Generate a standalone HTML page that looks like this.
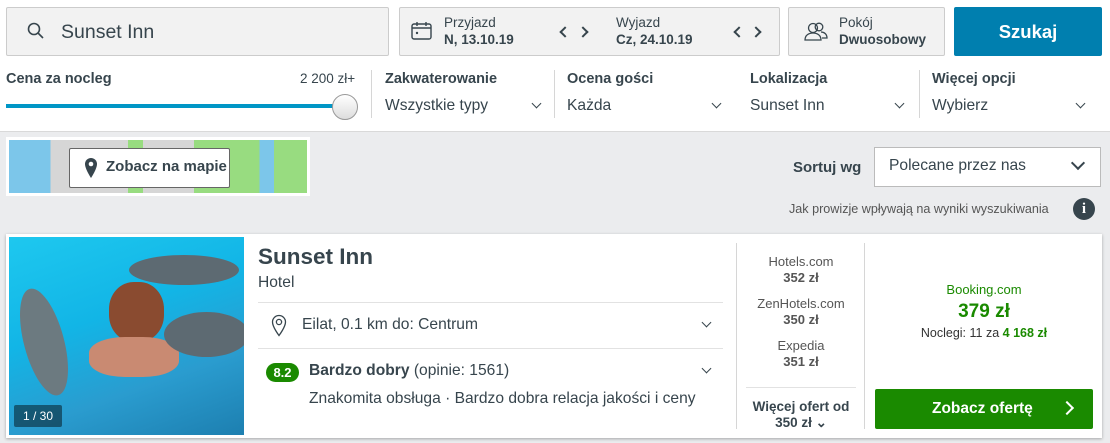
<!DOCTYPE html>
<html><head><meta charset="utf-8"><style>
*{box-sizing:border-box;margin:0;padding:0}
body{width:1110px;height:443px;overflow:hidden;font-family:"Liberation Sans",Arial,sans-serif;color:#37454d;background:#ebecee;position:relative}
.a{position:absolute}
.top{left:0;top:0;width:1110px;height:132px;background:#fff;border-bottom:1px solid #d9d9d9}
.box{background:#f2f2f2;border:1px solid #ccc;border-radius:2px}
.lbl{font-size:14.5px;font-weight:bold;color:#37454d}
.val{font-size:15.6px;color:#37454d}
.chev{width:7px;height:7px;border-right:1.6px solid #37454d;border-bottom:1.6px solid #37454d;transform:rotate(45deg)}
.arr{width:8px;height:8px;border-left:2.2px solid #37454d;border-bottom:2.2px solid #37454d}
.sep{width:1px;background:#d6d6d6}
</style></head><body>
<div class="a top"></div>
<div class="a box" style="left:6px;top:7px;width:383px;height:49px"></div>
<svg class="a" style="left:27px;top:22px" width="18" height="18" viewBox="0 0 18 18"><circle cx="7" cy="7" r="5.5" fill="none" stroke="#37454d" stroke-width="1.6"/><path d="M11 11l5 5" stroke="#37454d" stroke-width="1.6"/></svg>
<div class="a" style="left:61px;top:21px;font-size:19.5px;color:#37454d">Sunset Inn</div>
<div class="a box" style="left:399px;top:7px;width:381px;height:49px"></div>
<svg class="a" style="left:411px;top:21px" width="22" height="20" viewBox="0 0 22 20"><rect x="1" y="3" width="19" height="15" rx="2" fill="none" stroke="#37454d" stroke-width="1.4"/><path d="M1 7h19M6 1v4M15 1v4" stroke="#37454d" stroke-width="1.4"/><circle cx="6" cy="12" r="1.2" fill="#37454d"/></svg>
<div class="a" style="left:444px;top:15px;font-size:13.5px;color:#37454d">Przyjazd</div>
<div class="a" style="left:444px;top:32px;font-size:13.5px;font-weight:bold">N, 13.10.19</div>
<div class="a arr" style="left:561px;top:28px;transform:rotate(45deg)"></div>
<div class="a arr" style="left:579px;top:28px;transform:rotate(-135deg)"></div>
<div class="a" style="left:616px;top:15px;font-size:13.5px">Wyjazd</div>
<div class="a" style="left:616px;top:32px;font-size:13.5px;font-weight:bold">Cz, 24.10.19</div>
<div class="a arr" style="left:735px;top:28px;transform:rotate(45deg)"></div>
<div class="a arr" style="left:752px;top:28px;transform:rotate(-135deg)"></div>
<div class="a box" style="left:788px;top:7px;width:157px;height:49px"></div>
<svg class="a" style="left:803px;top:21px" width="26" height="22" viewBox="0 0 26 22"><circle cx="10" cy="7" r="4.5" fill="none" stroke="#37454d" stroke-width="1.3"/><path d="M2 19c0-5 4-7 8-7s8 2 8 7z" fill="none" stroke="#37454d" stroke-width="1.3"/><circle cx="16" cy="6" r="3.8" fill="none" stroke="#37454d" stroke-width="1.3"/><path d="M18 11c3 0 6 2 6 6h-5" fill="none" stroke="#37454d" stroke-width="1.3"/></svg>
<div class="a" style="left:839px;top:15px;font-size:13.5px">Pokój</div>
<div class="a" style="left:839px;top:32px;font-size:13.5px;font-weight:bold">Dwuosobowy</div>
<div class="a" style="left:954px;top:7px;width:148px;height:49px;background:#007faf;border-radius:2px;color:#fff;font-size:18.5px;font-weight:bold;text-align:center;line-height:49px">Szukaj</div>
<div class="a lbl" style="left:6px;top:71px">Cena za nocleg</div>
<div class="a" style="left:300px;top:71px;font-size:13.5px">2 200 zł+</div>
<div class="a" style="left:6px;top:104px;width:330px;height:4px;background:#0096c6"></div>
<div class="a" style="left:332px;top:94px;width:26px;height:26px;border-radius:50%;background:linear-gradient(#fff,#ddd);border:1px solid #999"></div>
<div class="a sep" style="left:371px;top:70px;height:48px"></div>
<div class="a lbl" style="left:385px;top:71px">Zakwaterowanie</div>
<div class="a val" style="left:385px;top:97px">Wszystkie typy</div>
<div class="a chev" style="left:494px;top:100px;left:494px;display:none"></div>
<div class="a chev" style="left:493px;top:100px;left:493px;display:none"></div>
<div class="a chev" style="left:494px;top:100px;display:none"></div>
<div class="a chev" style="left:494px;top:100px;display:none"></div>
<div class="a chev" style="left:494px;top:100px;display:none"></div>
<div class="a chev" style="left:494px;top:100px;display:none"></div>
<div class="a chev" style="left:494px;top:100px;display:none"></div>
<div class="a chev" style="left:494px;top:100px;display:none"></div>
<div class="a chev" style="left:494px;top:100px;display:none"></div>
<div class="a chev" style="left:494px;top:100px;display:none"></div>
<div class="a chev" style="left:494px;top:100px;display:none"></div>
<div class="a chev" style="left:494px;top:100px;display:none"></div>
<div class="a chev" style="left:494px;top:100px;display:none"></div>
<div class="a chev" style="left:494px;top:100px;display:none"></div>
<div class="a chev" style="left:494px;top:100px;display:none"></div>
<div class="a chev" style="left:494px;top:100px;display:none"></div>
<div class="a chev" style="left:494px;top:100px;display:none"></div>
<div class="a chev" style="left:494px;top:100px;display:none"></div>
<div class="a chev" style="left:494px;top:100px;display:none"></div>
<div class="a chev" style="left:494px;top:100px;display:none"></div>
<div class="a chev" style="left:494px;top:100px;display:none"></div>
<div class="a chev" style="left:494px;top:100px;display:none"></div>
<div class="a chev" style="left:494px;top:100px;display:none"></div>
<div class="a chev" style="left:494px;top:100px;display:none"></div>
<div class="a chev" style="left:494px;top:100px;display:none"></div>
<div class="a chev" style="left:494px;top:100px;display:none"></div>
<div class="a chev" style="left:494px;top:100px;display:none"></div>
<div class="a chev" style="left:494px;top:100px;display:none"></div>
<div class="a chev" style="left:494px;top:100px;display:none"></div>
<div class="a chev" style="left:494px;top:100px;display:none"></div>
<div class="a chev" style="left:494px;top:100px;display:none"></div>
<div class="a chev" style="left:494px;top:100px;display:none"></div>
<div class="a chev" style="left:494px;top:100px;display:none"></div>
<div class="a chev" style="left:494px;top:100px;display:none"></div>
<div class="a chev" style="left:494px;top:100px;display:none"></div>
<div class="a chev" style="left:494px;top:100px;display:none"></div>
<div class="a chev" style="left:494px;top:100px;display:none"></div>
<div class="a chev" style="left:494px;top:100px;display:none"></div>
<div class="a chev" style="left:494px;top:100px;display:none"></div>
<div class="a chev" style="left:494px;top:100px;display:none"></div>
<div class="a chev" style="left:494px;top:100px;display:none"></div>
<div class="a chev" style="left:494px;top:100px;display:none"></div>
<div class="a chev" style="left:494px;top:100px;display:none"></div>
<div class="a chev" style="left:494px;top:100px;display:none"></div>
<div class="a chev" style="left:494px;top:100px;display:none"></div>
<div class="a chev" style="left:494px;top:100px;display:none"></div>
<div class="a chev" style="left:494px;top:100px;display:none"></div>
<div class="a chev" style="left:494px;top:100px;display:none"></div>
<div class="a chev" style="left:494px;top:100px;display:none"></div>
<div class="a chev" style="left:494px;top:100px;display:none"></div>
<div class="a chev" style="left:494px;top:100px;display:none"></div>
<div class="a chev" style="left:494px;top:100px;display:none"></div>
<div class="a chev" style="left:494px;top:100px;display:none"></div>
<div class="a chev" style="left:494px;top:100px;display:none"></div>
<div class="a chev" style="left:494px;top:100px;display:none"></div>
<div class="a chev" style="left:494px;top:100px;display:none"></div>
<div class="a chev" style="left:494px;top:100px;display:none"></div>
<div class="a chev" style="left:494px;top:100px;display:none"></div>
<div class="a chev" style="left:494px;top:100px;display:none"></div>
<div class="a chev" style="left:494px;top:100px;display:none"></div>
<div class="a chev" style="left:494px;top:100px;display:none"></div>
<div class="a chev" style="left:494px;top:100px;display:none"></div>
<div class="a chev" style="left:533px;top:100px"></div>
<div class="a sep" style="left:554px;top:70px;height:48px"></div>
<div class="a lbl" style="left:567px;top:71px">Ocena gości</div>
<div class="a val" style="left:567px;top:97px">Każda</div>
<div class="a chev" style="left:713px;top:100px"></div>
<div class="a lbl" style="left:750px;top:71px">Lokalizacja</div>
<div class="a val" style="left:750px;top:97px">Sunset Inn</div>
<div class="a chev" style="left:896px;top:100px"></div>
<div class="a sep" style="left:919px;top:70px;height:48px"></div>
<div class="a lbl" style="left:932px;top:71px">Więcej opcji</div>
<div class="a val" style="left:932px;top:97px">Wybierz</div>
<div class="a chev" style="left:1077px;top:100px"></div>
<div class="a" style="left:6px;top:137px;width:304px;height:59px;background:#fff;padding:3px">
<div style="width:100%;height:100%;background:linear-gradient(90deg,#7cc6ea 0,#7cc6ea 14%,#d6d6d6 14%,#d6d6d6 40%,#98dc80 40%,#98dc80 45%,#d6d6d6 45%,#d6d6d6 62%,#98dc80 62%,#98dc80 84%,#7cc6ea 84%,#7cc6ea 89%,#98dc80 89%)"></div></div>
<div class="a" style="left:69px;top:148px;width:161px;height:40px;background:#fff;border:1px solid #666;border-radius:2px"></div>
<svg class="a" style="left:84px;top:157px" width="14" height="22" viewBox="0 0 14 22"><path d="M7 1a6 6 0 0 0-6 6c0 5 6 14 6 14s6-9 6-14a6 6 0 0 0-6-6z" fill="#37454d"/><circle cx="7" cy="7" r="2.3" fill="#fff"/></svg>
<div class="a" style="left:106px;top:158px;font-size:15px;font-weight:bold">Zobacz na mapie</div>
<div class="a lbl" style="left:793px;top:159px;font-size:15px">Sortuj wg</div>
<div class="a" style="left:874px;top:147px;width:227px;height:40px;background:#fff;border:1px solid #bbb"></div>
<div class="a val" style="left:889px;top:157px">Polecane przez nas</div>
<div class="a chev" style="left:1073px;top:158px;width:10px;height:10px;border-width:2px"></div>
<div class="a" style="left:789px;top:202px;font-size:12.6px;color:#555">Jak prowizje wpływają na wyniki wyszukiwania</div>
<div class="a" style="left:1073px;top:198px;width:22px;height:22px;border-radius:50%;background:#37454d;color:#fff;font-weight:bold;font-size:15px;text-align:center;line-height:22px;font-family:'Liberation Serif',serif">i</div>
<div class="a" style="left:6px;top:234px;width:1096px;height:204px;background:#fff;box-shadow:0 1px 3px rgba(0,0,0,.3)"></div>
<div class="a" style="left:9px;top:237px;width:235px;height:198px;background:linear-gradient(160deg,#1ec8ef 0%,#12b5e6 40%,#2a9ccf 70%,#1d7fb0 100%);overflow:hidden">
<div class="a" style="left:120px;top:18px;width:110px;height:30px;border-radius:50%;background:#5d6a72"></div>
<div class="a" style="left:15px;top:50px;width:40px;height:110px;border-radius:50%;background:#6c7a80;transform:rotate(-15deg)"></div>
<div class="a" style="left:100px;top:45px;width:55px;height:60px;border-radius:45%;background:#8a4b30"></div>
<div class="a" style="left:80px;top:100px;width:90px;height:40px;border-radius:40%;background:#c98a72"></div>
<div class="a" style="left:155px;top:75px;width:85px;height:45px;border-radius:50%;background:#5d6a72"></div>
<div class="a" style="left:5px;top:168px;width:48px;height:22px;background:rgba(0,0,0,.45);color:#fff;font-size:12px;text-align:center;line-height:22px;border-radius:2px">1 / 30</div>
</div>
<div class="a" style="left:258px;top:244px;font-size:22.5px;font-weight:bold">Sunset Inn</div>
<div class="a" style="left:258px;top:274px;font-size:15.6px">Hotel</div>
<div class="a" style="left:258px;top:302px;width:465px;height:1px;background:#e2e2e2"></div>
<svg class="a" style="left:271px;top:314px" width="16" height="23" viewBox="0 0 16 23"><path d="M8 1.5a6.5 6.5 0 0 0-6.5 6.5C1.5 13 8 21.5 8 21.5S14.5 13 14.5 8A6.5 6.5 0 0 0 8 1.5z" fill="none" stroke="#37454d" stroke-width="1.3"/><circle cx="8" cy="8" r="2.6" fill="none" stroke="#37454d" stroke-width="1.3"/></svg>
<div class="a val" style="left:302px;top:316px">Eilat, 0.1 km do: Centrum</div>
<div class="a chev" style="left:703px;top:319px"></div>
<div class="a" style="left:258px;top:348px;width:465px;height:1px;background:#e2e2e2"></div>
<div class="a" style="left:266px;top:363px;width:33px;height:19px;border-radius:10px;background:#1a8a00;color:#fff;font-size:13px;font-weight:bold;text-align:center;line-height:19px">8.2</div>
<div class="a val" style="left:309px;top:362px"><b>Bardzo dobry</b> (opinie: 1561)</div>
<div class="a chev" style="left:703px;top:365px"></div>
<div class="a" style="left:309px;top:390px;font-size:15.6px">Znakomita obsługa · Bardzo dobra relacja jakości i ceny</div>
<div class="a sep" style="left:736px;top:243px;height:186px"></div>
<div class="a" style="left:746px;top:254px;width:110px;text-align:center;font-size:13px;color:#555;line-height:16px">Hotels.com<br><b>352 zł</b><br><div style="height:10px"></div>ZenHotels.com<br><b>350 zł</b><br><div style="height:10px"></div>Expedia<br><b>351 zł</b></div>
<div class="a" style="left:746px;top:387px;width:110px;height:1px;background:#e2e2e2"></div>
<div class="a" style="left:746px;top:399px;width:110px;text-align:center;font-size:13.5px;font-weight:bold;line-height:16px">Więcej ofert od<br>350 zł ⌄</div>
<div class="a sep" style="left:864px;top:243px;height:186px"></div>
<div class="a" style="left:875px;top:282px;width:218px;text-align:center;font-size:13px;color:#1a8a00">Booking.com</div>
<div class="a" style="left:875px;top:301px;width:218px;text-align:center;font-size:19px;font-weight:bold;color:#1a8a00">379 zł</div>
<div class="a" style="left:875px;top:326px;width:218px;text-align:center;font-size:12.5px;color:#333">Noclegi: 11 za <b style="color:#1a8a00">4 168 zł</b></div>
<div class="a" style="left:875px;top:389px;width:218px;height:40px;background:#1a8a00;border-radius:2px;color:#fff;font-size:15.5px;font-weight:bold;line-height:40px;padding-left:57px">Zobacz ofertę</div>
<div class="a" style="left:1062px;top:403px;width:10px;height:10px;border-right:2px solid #fff;border-top:2px solid #fff;transform:rotate(45deg)"></div>
</body></html>
